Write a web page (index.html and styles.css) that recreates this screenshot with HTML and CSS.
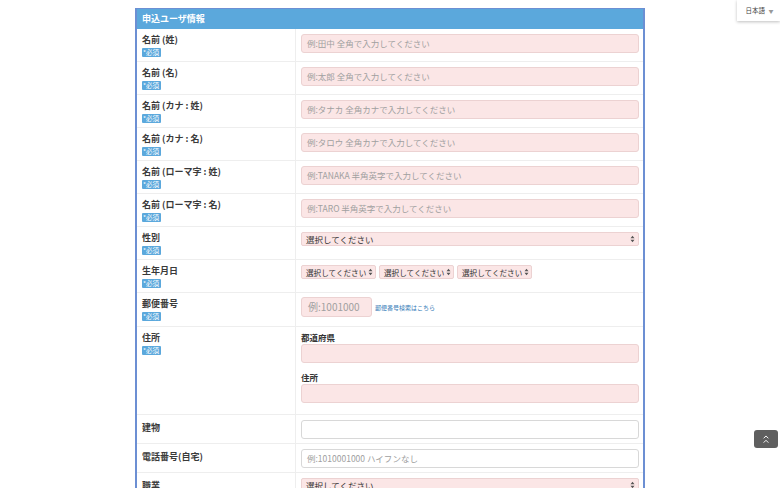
FILE: index.html
```html
<!DOCTYPE html>
<html lang="ja">
<head>
<meta charset="utf-8">
<link rel="stylesheet" href="styles.css">
</head>
<body>
<div class="lang">日本語 <span class="lang-arrow">▼</span></div>
<div class="panel">
  <div class="panel-head">申込ユーザ情報</div>
  <div class="row">
    <div class="label"><div class="ltext">名前 (姓)</div><span class="req">*必須</span></div>
    <div class="field"><div class="input pink ph">例:田中 全角で入力してください</div></div>
  </div>
  <div class="row">
    <div class="label"><div class="ltext">名前 (名)</div><span class="req">*必須</span></div>
    <div class="field"><div class="input pink ph">例:太郎 全角で入力してください</div></div>
  </div>
  <div class="row">
    <div class="label"><div class="ltext">名前 (カナ : 姓)</div><span class="req">*必須</span></div>
    <div class="field"><div class="input pink ph">例:タナカ 全角カナで入力してください</div></div>
  </div>
  <div class="row">
    <div class="label"><div class="ltext">名前 (カナ : 名)</div><span class="req">*必須</span></div>
    <div class="field"><div class="input pink ph">例:タロウ 全角カナで入力してください</div></div>
  </div>
  <div class="row">
    <div class="label"><div class="ltext">名前 (ローマ字 : 姓)</div><span class="req">*必須</span></div>
    <div class="field"><div class="input pink ph">例:TANAKA 半角英字で入力してください</div></div>
  </div>
  <div class="row">
    <div class="label"><div class="ltext">名前 (ローマ字 : 名)</div><span class="req">*必須</span></div>
    <div class="field"><div class="input pink ph">例:TARO 半角英字で入力してください</div></div>
  </div>
  <div class="row">
    <div class="label"><div class="ltext">性別</div><span class="req">*必須</span></div>
    <div class="field field-sel"><div class="select full">選択してください<svg class="arr" viewBox="0 0 6 10" width="5" height="8"><path d="M0.5 4 L3 1 L5.5 4 Z M0.5 6 L3 9 L5.5 6 Z" fill="#555"/></svg></div></div>
  </div>
  <div class="row">
    <div class="label"><div class="ltext">生年月日</div><span class="req">*必須</span></div>
    <div class="field field-sel dates">
      <div class="select sm">選択してください<svg class="arr" viewBox="0 0 6 10" width="5" height="8"><path d="M0.5 4 L3 1 L5.5 4 Z M0.5 6 L3 9 L5.5 6 Z" fill="#555"/></svg></div>
      <div class="select sm">選択してください<svg class="arr" viewBox="0 0 6 10" width="5" height="8"><path d="M0.5 4 L3 1 L5.5 4 Z M0.5 6 L3 9 L5.5 6 Z" fill="#555"/></svg></div>
      <div class="select sm">選択してください<svg class="arr" viewBox="0 0 6 10" width="5" height="8"><path d="M0.5 4 L3 1 L5.5 4 Z M0.5 6 L3 9 L5.5 6 Z" fill="#555"/></svg></div>
    </div>
  </div>
  <div class="row row-zip">
    <div class="label"><div class="ltext">郵便番号</div><span class="req">*必須</span></div>
    <div class="field zip"><div class="input pink ph zipin">例:1001000</div><a class="ziplink">郵便番号検索はこちら</a></div>
  </div>
  <div class="row row-addr">
    <div class="label"><div class="ltext">住所</div><span class="req">*必須</span></div>
    <div class="field addr">
      <div class="sub">都道府県</div>
      <div class="input pink"></div>
      <div class="sub sub2">住所</div>
      <div class="input pink"></div>
    </div>
  </div>
  <div class="row row-s">
    <div class="label label-s"><div class="ltext">建物</div></div>
    <div class="field"><div class="input white"></div></div>
  </div>
  <div class="row row-s">
    <div class="label label-s"><div class="ltext">電話番号(自宅)</div></div>
    <div class="field"><div class="input white ph">例:1010001000 ハイフンなし</div></div>
  </div>
  <div class="row">
    <div class="label label-s"><div class="ltext">職業</div></div>
    <div class="field field-sel"><div class="select full">選択してください<svg class="arr" viewBox="0 0 6 10" width="5" height="8"><path d="M0.5 4 L3 1 L5.5 4 Z M0.5 6 L3 9 L5.5 6 Z" fill="#555"/></svg></div></div>
  </div>
</div>
<div class="totop"><svg viewBox="0 0 10 14" width="8" height="11"><path d="M2 5.5 L5 2.5 L8 5.5 M2 11 L5 8 L8 11" fill="none" stroke="#fff" stroke-width="1.2"/></svg></div>
</body>
</html>
```
FILE: styles.css
```css
html, body {
  margin: 0;
  padding: 0;
  background: #fff;
  font-family: "Noto Sans CJK JP", "Noto Sans", sans-serif;
  color: #333;
  overflow: hidden;
  height: 488px;
}
.panel {
  width: 506px;
  margin: 8px auto 0;
  border-left: 2px solid #6c8fd3;
  border-right: 2px solid #6c8fd3;
  border-top: 1px solid #6c8fd3;
}
.panel-head {
  height: 20px;
  background: #5ba8dc;
  color: #fff;
  font-size: 9px;
  font-weight: bold;
  line-height: 20px;
  padding-left: 5px;
}
.row {
  display: grid;
  grid-template-columns: 159px 1fr;
  border-bottom: 1px solid #eee;
  height: 32px;
}
.row-zip { height: 33px; }
.row-addr { height: 87px; }
.row-s { height: 28px; }
.label {
  border-right: 1px solid #eee;
  padding: 4px 5px 0;
}
.label-s { padding-top: 6px; }
.ltext {
  font-size: 9px;
  font-weight: bold;
  line-height: 13px;
  color: #3a3a3a;
}
.req {
  display: inline-block;
  margin-top: 2px;
  background: #5ba8dc;
  color: #fff;
  font-size: 6.5px;
  line-height: 9px;
  height: 9px;
  padding: 0 2px 0 1px;
  border-radius: 1px;
  vertical-align: top;
}
.field {
  padding: 5px 4px 0 5px;
}
.input {
  height: 17px;
  border: 1px solid #ecd2d2;
  border-radius: 3px;
  font-size: 8.5px;
  line-height: 17px;
  padding: 0 5px;
  box-sizing: content-box;
}
.pink { background: #fbe6e6; }
.white { background: #fff; border-color: #d8d8d8; }
.ph { color: #a0a0a0; }
.field-sel { padding-top: 5px; }
.select {
  display: inline-flex;
  align-items: center;
  height: 12px;
  background: #fbe6e6;
  border: 1px solid #ecd2d2;
  border-radius: 2px;
  font-size: 8.5px;
  color: #333;
  padding: 0 2px 0 4px;
  gap: 2px;
  white-space: nowrap;
}
.select.full {
  display: flex;
  justify-content: space-between;
  padding-right: 3px;
}
.select.sm {
  width: 67px;
  font-size: 7.6px;
  justify-content: space-between;
  padding: 0 2px 0 4px;
}
.dates { display: flex; gap: 3px; }
.arr { display: block; flex: none; }
.zip { display: flex; align-items: center; align-self: start; padding-top: 4px; }
.zipin {
  width: 63px;
  height: 18px;
  line-height: 18px;
  font-size: 10px;
  padding: 0 0 0 6px;
}
.ziplink {
  margin-left: 3px;
  font-size: 6px;
  color: #337ab7;
}
.addr { padding-top: 4px; }
.sub {
  font-size: 8.5px;
  font-weight: bold;
  line-height: 12px;
  color: #333;
  margin-bottom: 1px;
}
.sub2 { margin-top: 8px; }
.lang {
  position: absolute;
  top: 0;
  right: 0;
  width: 43px;
  height: 21px;
  background: #fff;
  box-shadow: 0 1px 3px rgba(0,0,0,0.25);
  font-size: 6.5px;
  line-height: 21px;
  color: #444;
  text-align: center;
  box-sizing: border-box;
  padding-left: 2px;
}
.lang-arrow { color: #999; font-size: 5px; margin-left: 2px; }
.totop {
  position: fixed;
  left: 754px;
  top: 430px;
  width: 24px;
  height: 18px;
  background: #5f5f5f;
  border-radius: 3px;
  display: flex;
  align-items: center;
  justify-content: center;
}
```
